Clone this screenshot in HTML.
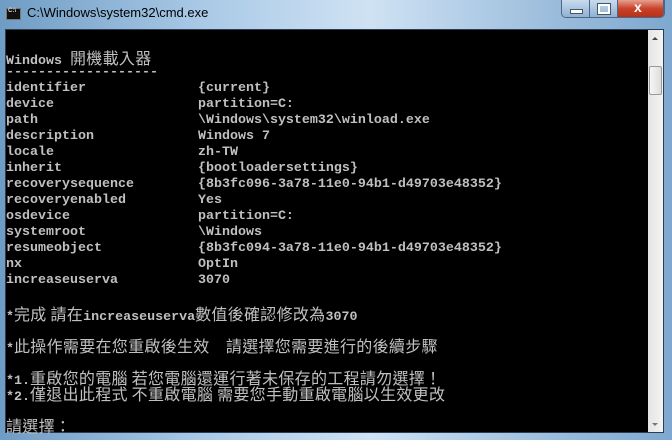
<!DOCTYPE html>
<html><head><meta charset="utf-8"><style>
*{margin:0;padding:0}
body{width:672px;height:440px;overflow:hidden;background:linear-gradient(90deg,#6f9cc4 0%,#a9c9e6 30%,#cfe2f3 55%,#9fc0de 80%,#7ea8cf 100%);position:relative;font-family:"Liberation Mono",monospace}
.title{position:absolute;left:27px;top:5px;font:13px "Liberation Sans",sans-serif;color:#000}
.icon{position:absolute;left:6px;top:8px;width:13px;height:10px;background:#111;border:1px solid #777}
.icon:after{content:"C:\\";position:absolute;left:1px;top:-1px;font:bold 6px "Liberation Sans";color:#ddd}
.btns{position:absolute;left:561px;top:0;height:17px;width:102px;border:1px solid #4c6688;border-top:0;border-radius:0 0 5px 5px;overflow:hidden;display:flex}
.b{height:17px;background:linear-gradient(#c9dbee,#8fb0d2);border-right:1px solid #4c6688;position:relative}
.cl{background:linear-gradient(#e8a08f,#c8432c 50%,#b83018);flex:1}
.con{position:absolute;left:5px;top:29px;width:642px;height:402px;background:#000;border:1px solid #2a3d55}
.sb{position:absolute;left:648px;top:29px;width:15px;height:402px;background:linear-gradient(90deg,#e4e4e4,#f4f4f4);border:1px solid #2a3d55;border-left:0}
.l{position:absolute;left:6px;color:#c0c0c0;font-size:13.33px;font-weight:bold;line-height:16px;white-space:pre}
.c{font-family:"Noto Sans CJK TC","WenQuanYi Zen Hei",sans-serif;font-size:16px;font-weight:normal;letter-spacing:0.3px}
</style></head><body>
<div class="icon"></div>
<div class="title">C:\Windows\system32\cmd.exe</div>
<div class="btns"><div class="b" style="width:27px"><div style="position:absolute;left:8px;top:9px;width:11px;height:3px;background:#fff;border:1px solid #456"></div></div><div class="b" style="width:27px"><div style="position:absolute;left:8px;top:4px;width:8px;height:6px;border:2px solid #fff;outline:1px solid #456"></div></div><div class="b cl"><div style="position:absolute;left:16px;top:-1px;color:#fff;font:bold 14px 'Liberation Sans'">x</div></div></div>
<div class="con"></div>
<div class="sb"><div style="position:absolute;left:4px;top:7px;border:3px solid transparent;border-bottom:3px solid #444;border-top:0"></div><div style="position:absolute;left:1px;top:36px;width:11px;height:27px;border:1px solid #999;border-radius:2px;background:linear-gradient(90deg,#f6f6f6,#ddd)"></div><div style="position:absolute;left:4px;top:393px;border:3px solid transparent;border-top:3px solid #777;border-bottom:0"></div></div>
<div class="l" style="top:49px">Windows <span class="c">開機載入器</span></div>
<div class="l" style="top:65px">-------------------</div>
<div class="l" style="top:81px">identifier              {current}
device                  partition=C:
path                    \Windows\system32\winload.exe
description             Windows 7
locale                  zh-TW
inherit                 {bootloadersettings}
recoverysequence        {8b3fc096-3a78-11e0-94b1-d49703e48352}
recoveryenabled         Yes
osdevice                partition=C:
systemroot              \Windows
resumeobject            {8b3fc094-3a78-11e0-94b1-d49703e48352}
nx                      OptIn
increaseuserva          3070</div>
<div class="l" style="top:305px">*<span class="c">完成 請在</span>increaseuserva<span class="c">數值後確認修改為</span>3070</div>
<div class="l" style="top:337px">*<span class="c">此操作需要在您重啟後生效　請選擇您需要進行的後續步驟</span></div>
<div class="l" style="top:369px">*1.<span class="c">重啟您的電腦 若您電腦還運行著未保存的工程請勿選擇！</span></div>
<div class="l" style="top:385px">*2.<span class="c">僅退出此程式 不重啟電腦 需要您手動重啟電腦以生效更改</span></div>
<div class="l" style="top:417px"><span class="c">請選擇：</span></div>
</body></html>
